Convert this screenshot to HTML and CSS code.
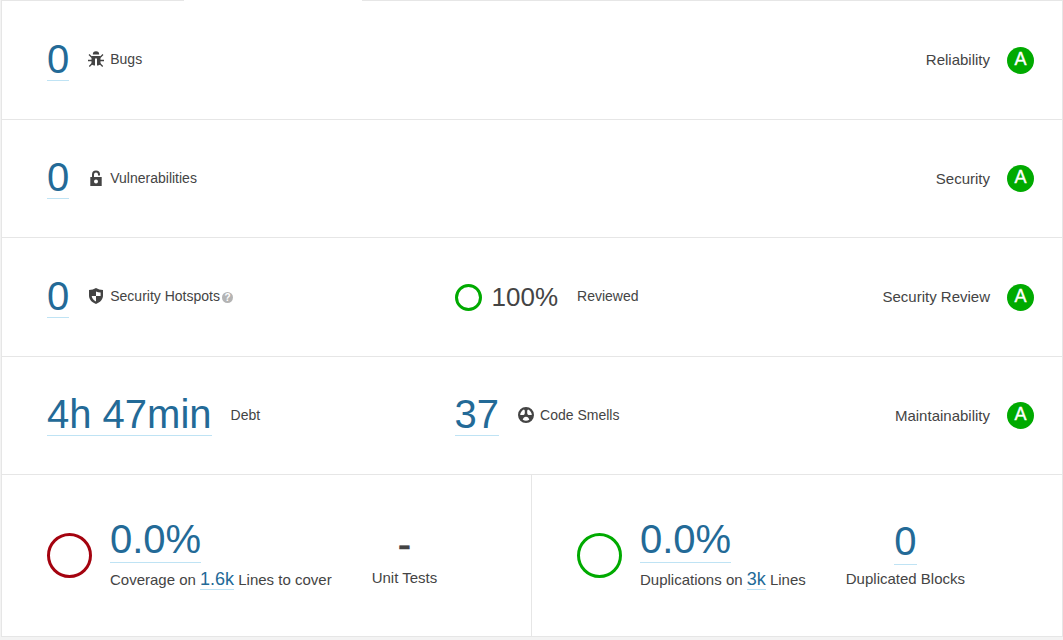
FILE: index.html
```html
<!DOCTYPE html>
<html lang="en">
<head>
<meta charset="utf-8">
<meta name="viewport" content="width=device-width, initial-scale=1">
<title>Measures</title>
<link rel="stylesheet" href="styles.css">
</head>
<body>
<main class="panel">
  <section class="row">
    <div class="cell"><a class="value" href="#">0</a>
      <span class="label"><svg class="icon" viewBox="0 0 16 16"><path fill="currentColor" d="M4.800 3.400a3.200 3.200 0 0 1 6.400 0zM3.500 5h9v8.500L10 14.500H9V7.500H7v7H6l-2.500-1z"/><path fill="none" stroke="currentColor" stroke-width="1.300" d="M4 6.500 1 3.500M4 9.500H0M4.500 12.300 1.300 15.500M12 6.500l3-3M12 9.500h4M11.500 12.300l3.200 3.200"/></svg>Bugs</span></div>
    <div class="rating">Reliability <span class="grade">A</span></div>
  </section>
  <section class="row">
    <div class="cell"><a class="value" href="#">0</a>
      <span class="label"><svg class="icon" viewBox="0 0 16 16"><path fill="currentColor" fill-rule="evenodd" d="M2.300 7H4V4.400a4 4 0 0 1 8 0V5.500h-2V4.400a2 2 0 0 0-4 0V7h7.700v9H2.300zM8 9.400a2 2 0 1 0 0 4 2 2 0 0 0 0-4z"/></svg>Vulnerabilities</span></div>
    <div class="rating">Security <span class="grade">A</span></div>
  </section>
  <section class="row">
    <div class="cell"><a class="value" href="#">0</a>
      <span class="label"><svg class="icon" viewBox="0 0 16 16"><path fill="currentColor" fill-rule="evenodd" d="M8 0Q11 1.900 15 2v5.500c0 4-3 7-7 8.500-4-1.500-7-4.500-7-8.500V2Q5 1.900 8 0zM8 3.400V8h4.600V4.500Q10 4.400 8 3.400zM8 8H3.700c.3 2.500 2 4.300 4.300 5.400z"/></svg>Security Hotspots</span><button class="help" type="button" aria-label="Help">?</button></div>
    <div class="cell"><span class="ring ring-small"></span><span class="percent">100%</span><span class="label">Reviewed</span></div>
    <div class="rating">Security Review <span class="grade">A</span></div>
  </section>
  <section class="row">
    <div class="cell"><a class="value" href="#">4h 47min</a><span class="label">Debt</span></div>
    <div class="cell"><a class="value" href="#">37</a>
      <span class="label"><svg class="icon" viewBox="0 0 16 16"><path fill="currentColor" fill-rule="evenodd" d="M8 0a8 8 0 1 0 0 16A8 8 0 0 0 8 0zM5.800 2.500Q6.800 2.500 6.800 4V6.200Q6.500 8 5.500 8H2.200Q2.400 4.500 5.800 2.500zM10.200 2.500Q9.200 2.500 9.200 4V6.200Q9.500 8 10.500 8H13.800Q13.600 4.500 10.200 2.500zM8 9.700Q10.500 9.700 11.300 12.700 8 15 4.700 12.700 5.500 9.700 8 9.700z"/></svg>Code Smells</span></div>
    <div class="rating">Maintainability <span class="grade">A</span></div>
  </section>
  <div class="summary">
    <section class="half">
      <span class="ring ring-red"></span>
      <div class="detail"><a class="value" href="#">0.0%</a><div class="caption">Coverage on <a class="inline-value" href="#">1.6k</a> Lines to cover</div></div>
      <div class="side"><span class="none">-</span><div class="caption">Unit Tests</div></div>
    </section>
    <section class="half">
      <span class="ring"></span>
      <div class="detail"><a class="value" href="#">0.0%</a><div class="caption">Duplications on <a class="inline-value" href="#">3k</a> Lines</div></div>
      <div class="side"><a class="value" href="#">0</a><div class="caption">Duplicated Blocks</div></div>
    </section>
  </div>
</main>
</body>
</html>
```
FILE: styles.css
```css
* { box-sizing: border-box; }
body {
  margin: 0;
  padding: 0 0 3px 1px;
  background: #f3f3f3;
  color: #444;
  font-family: "Liberation Sans", Arial, sans-serif;
  font-size: 15px;
}
.panel { position: relative; background: #fff; border: 1px solid #e6e6e6; }
/* opening in the top border under the active tab */
.panel::before {
  content: "";
  position: absolute;
  top: -1px;
  left: 182px;
  width: 178px;
  height: 1px;
  background: #fff;
}
.row {
  display: grid;
  grid-template-columns: 408fr 400fr 180fr;
  align-items: center;
  min-height: 119px;
  padding: 0 28px 0 45px;
  border-bottom: 1px solid #e6e6e6;
}
.row:nth-child(even) { min-height: 118px; }
.cell { display: flex; align-items: center; white-space: nowrap; }
.value {
  display: inline-block;
  color: #236a97;
  font-size: 40px;
  line-height: 38px;
  padding-bottom: 2px;
  border-bottom: 1px solid #bfe3f4;
  text-decoration: none;
}
.label {
  display: flex;
  align-items: center;
  gap: 6px;
  margin-left: 19px;
  padding-bottom: 2px;
  font-size: 14px;
  line-height: 16px;
}
.icon { width: 16px; height: 16px; }
.help {
  width: 11px;
  height: 11px;
  margin-left: 2px;
  padding: 0;
  border: 0;
  border-radius: 50%;
  background: #b4b4b4;
  color: #fff;
  font: bold 10px/11px "Liberation Sans", Arial, sans-serif;
}
.rating {
  grid-column: 3;
  display: flex;
  align-items: center;
  justify-content: flex-end;
  gap: 17px;
  line-height: 16px;
  white-space: nowrap;
}
.grade {
  width: 27px;
  height: 27px;
  border-radius: 50%;
  background: #0a0;
  color: #fff;
  font-size: 18px;
  -webkit-text-stroke: 0.4px #fff;
  line-height: 25px;
  text-align: center;
}
.ring {
  flex: none;
  width: 45px;
  height: 45px;
  border: 3px solid #0a0;
  border-radius: 50%;
}
.ring-small { width: 27px; height: 27px; }
.ring-red { border-color: #a4030f; }
.percent { margin-left: 10px; font-size: 26px; line-height: 30px; }
.summary { display: grid; grid-template-columns: 1fr 1fr; }
.half { display: flex; align-items: center; min-height: 161px; padding-left: 45px; white-space: nowrap; }
.half:first-child { border-right: 1px solid #e6e6e6; }
.detail { margin-left: 18px; }
.detail .value { padding-bottom: 4px; }
.caption { line-height: 20px; }
.detail .caption { margin-top: 5px; line-height: 24px; }
.inline-value {
  display: inline-block;
  color: #236a97;
  font-size: 18px;
  line-height: 20px;
  border-bottom: 1px solid #bfe3f4;
  text-decoration: none;
}
.side { margin-left: 40px; text-align: center; }
.side .value { padding-bottom: 4px; }
.side .caption { margin-top: 4px; }
.none { display: block; font-size: 40px; line-height: 40px; -webkit-text-stroke: 0.5px #444; }
```
